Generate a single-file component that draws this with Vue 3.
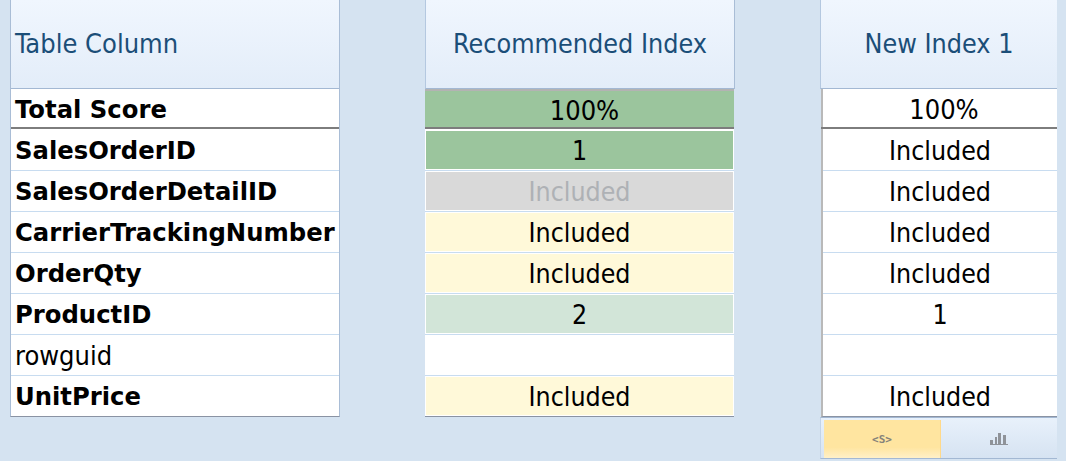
<script setup>
const cols = ['SalesOrderID','SalesOrderDetailID','CarrierTrackingNumber','OrderQty','ProductID','rowguid','UnitPrice']
const rec = [['1','g'],['Included','x'],['Included','y'],['Included','y'],['2','l'],['',''],['Included','y']]
const nw = ['Included','Included','Included','Included','1','','Included']
</script>

<template>
  <div class="page">
    <section class="col left">
      <header class="head start">Table Column</header>
      <div class="total name">Total Score</div>
      <div v-for="c in cols" :key="c" class="row name" :class="{ plain: c === 'rowguid' }">{{ c }}</div>
    </section>

    <section class="col mid">
      <header class="head">Recommended Index</header>
      <div class="total val green">100%</div>
      <div v-for="(r, i) in rec" :key="i" class="row val">
        <span class="fill" :class="r[1]">{{ r[0] }}</span>
      </div>
    </section>

    <div class="stack">
      <section class="col right">
        <header class="head">New Index 1</header>
        <div class="total val">100%</div>
        <div v-for="(n, i) in nw" :key="i" class="row val">{{ n }}</div>
      </section>
      <nav class="tabs">
        <div class="tab on"><span class="code">&lt;S&gt;</span></div>
        <div class="tab">
          <svg width="18" height="12" viewBox="0 0 18 12"><g fill="#8f9399"><rect x="0" y="7" width="3" height="4"/><rect x="5" y="4" width="2" height="7"/><rect x="8" y="0" width="3" height="11"/><rect x="13" y="2" width="3" height="9"/><rect x="0" y="11" width="18" height="1"/></g></svg>
        </div>
      </nav>
    </div>
  </div>
</template>

<style>
html, body { margin: 0; background: #d5e3f1; }
</style>

<style scoped>
.page {
  width: 1066px;
  height: 461px;
  overflow: hidden;
  box-sizing: border-box;
  padding-left: 10px;
  display: flex;
  align-items: flex-start;
  background: #d5e3f1;
  font-family: "DejaVu Sans Condensed", "DejaVu Sans", sans-serif;
  font-stretch: condensed;
  color: #000;
}
.col {
  box-sizing: border-box;
  background: #fff;
  border-bottom: 1px solid #8a93a3;
}
.left { width: 330px; border-left: 1px solid #a9bdd6; border-right: 1px solid #a9bdd6; }
.mid { width: 309px; margin-left: 85px; }
.mid .head { margin-right: -1px; border-left: 1px solid #b4c8e0; border-right: 1px solid #a9bdd6; }
.stack { width: 236px; margin-left: 87px; }
.right { width: 236px; border-left: 2px solid #b9b9b9; }
.right .head { margin-left: -3px; border-left: 1px solid #b4c8e0; }
.right .total { margin-left: -2px; }
.head {
  height: 89px;
  box-sizing: border-box;
  border-bottom: 1px solid #a3b8d3;
  background: linear-gradient(#f0f6fe, #e3edf9);
  display: flex;
  align-items: center;
  justify-content: center;
  padding-bottom: 1px;
  font-size: 26.7px;
  color: #1b4e78;
}
.head.start { justify-content: flex-start; padding-left: 4px; font-size: 27px; }
.total {
  height: 40px;
  box-sizing: border-box;
  border-bottom: 2px solid #7d7d7d;
  padding-top: 2px;
  font-size: 27px;
  display: flex;
  align-items: center;
}
.total.val { padding-left: 10px; }
.row {
  height: 41px;
  box-sizing: border-box;
  border-bottom: 1px solid #c8dcf0;
  font-size: 26.5px;
  display: flex;
  align-items: center;
}
.total + .row { height: 42px; padding-top: 1px; }
.row:last-child { height: 40px; border-bottom: none; }
.name { padding-left: 4px; font-weight: 700; font-size: 24.3px; font-stretch: normal; font-family: "DejaVu Sans", sans-serif; }
.name.plain { font-weight: 400; font-size: 27px; font-stretch: condensed; font-family: "DejaVu Sans Condensed", "DejaVu Sans", sans-serif; }
.val { justify-content: center; }
.green { background: #9bc59d; border-top: 2px solid #b3b3b3; }
.fill {
  flex: 1;
  align-self: stretch;
  margin: 1px;
  display: flex;
  align-items: center;
  justify-content: center;
}
.g { background: #9bc59d; }
.x { background: #d9d9d9; color: #aeb1b5; }
.y { background: #fff9d9; }
.l { background: #d2e5d8; }
.tabs {
  height: 42px;
  margin-left: -1px;
  box-sizing: border-box;
  border-top: 1px solid #a3b8d3;
  border-bottom: 1px solid #a3b8d3;
  border-left: 1px solid #c3d4e8;
  display: flex;
  padding: 2px 0 0 3px;
  background: linear-gradient(#e8f1fb, #d6e3f2);
}
.tab { width: 117px; display: flex; align-items: center; justify-content: center; }
.tab.on { background: linear-gradient(#ffe5a0 0 72%, #fff0c8); border-right: 1px solid #ffd98a; }
.code { font-family: "DejaVu Sans Mono", monospace; font-weight: 700; font-size: 11px; color: #85827a; }
</style>
